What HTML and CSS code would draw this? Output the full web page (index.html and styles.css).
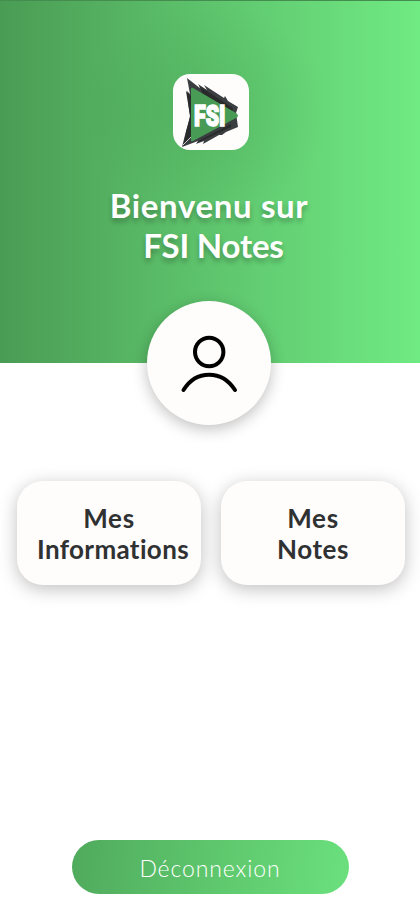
FILE: index.html
```html
<!DOCTYPE html>
<html lang="fr">
<head>
<meta charset="utf-8">
<meta name="viewport" content="width=device-width, initial-scale=1">
<title>FSI Notes</title>
<link rel="stylesheet" href="styles.css">
</head>
<body>
<div class="screen">
  <header class="hero">
    <svg class="logo" viewBox="0 0 76 76" role="img" aria-label="FSI">
      <path fill="#3b3e41" d="M14 4 28 15 25 10 34 16 31 11 51 24 52 22 55 27 65 33 63 39 65 53 53 58 49 61 46 61 30 70 31 67 23 70 25 67 9 73 13 57 17 44 14 17 17 20Z"/>
      <path fill="#fffcfc" d="M12 18 17 42 12 58 8 58V18Z"/>
      <path fill="#292b2b" d="M13 17 18 22V63L10 72 14 54 17 42ZM26 12 60 34 59 38 30 20ZM58 50 27 66 24 69 58 53Z"/>
      <path fill="none" stroke="#fffcfc" stroke-width=".8" d="M18 63 10 71"/>
      <path fill="#489b54" d="M18 15Q18 13 20 14L63 39Q67 42 63 44L20 67Q18 68 18 66Z"/>
      <text class="logo-text" x="21" y="52" textLength="31.500" lengthAdjust="spacingAndGlyphs">FSI</text>
    </svg>
    <h1 class="title"><span class="line-one">Bienvenu sur</span><span class="line-two">FSI Notes</span></h1>
  </header>
  <div class="avatar">
    <svg class="person" viewBox="0 0 60 60" aria-hidden="true">
      <circle cx="30.200" cy="18" r="14.200"/>
      <path d="M4.500 56C17 35.500 43 35.500 56 56"/>
    </svg>
  </div>
  <nav class="cards">
    <a class="card"><span class="mes">Mes</span><span class="informations">Informations</span></a>
    <a class="card"><span class="mes">Mes</span><span class="notes">Notes</span></a>
  </nav>
  <button class="logout" type="button">Déconnexion</button>
</div>
</body>
</html>
```
FILE: styles.css
```css
* { box-sizing: border-box; }
body { margin: 0; background: #fff; font-family: "Century Gothic", Lato, sans-serif; }
.screen { height: 914px; display: flex; flex-direction: column; align-items: center; overflow: hidden; }
.hero {
  width: 100%; height: 363px; flex: none; padding-top: 73px;
  display: flex; flex-direction: column; align-items: center;
  border-top: 1px solid #448d4e;
  background:
    radial-gradient(ellipse 125px 110px at 205px 110px, rgba(50, 130, 60, .2), rgba(50, 130, 60, 0)),
    linear-gradient(90deg, #4a9c54 0%, #5fc66e 52%, #70ea83 100%);
}
.logo { width: 76px; height: 76px; background: #fffcfc; border-radius: 17px; margin-left: 2px; flex: none; }
.logo-text { font-family: Roboto, sans-serif; font-weight: 900; font-size: 30px; fill: #fff; stroke: #fff; stroke-width: 1.6px; }
.title {
  margin: 35px 0 0; display: flex; flex-direction: column; align-items: center;
  color: #fff; font-size: 33px; line-height: 40px; font-weight: 700;
  text-shadow: 0 4px 5px rgba(0, 0, 0, .25);
}
.title span { white-space: nowrap; }
.line-one { letter-spacing: .65px; margin-right: 2px; }
.line-two { letter-spacing: -.2px; margin-left: 7px; }
.avatar {
  width: 124px; height: 124px; margin: -62px 2px 0 0; flex: none; position: relative;
  display: flex; justify-content: center; border-radius: 50%;
  background: #fffcfc; box-shadow: 0 4px 15px rgba(0, 0, 0, .25); padding-top: 33px;
}
.person { width: 60px; height: 60px; fill: none; stroke: #000; stroke-width: 4; stroke-linecap: round; }
.cards { display: flex; gap: 20px; margin: 56px 0 0 2px; }
.card {
  width: 184px; height: 104px; border-radius: 26px; padding-top: 22px;
  display: flex; flex-direction: column; align-items: center;
  background: #fffcfc; box-shadow: 0 4px 18px rgba(0, 0, 0, .25);
  color: #303132; font-size: 26px; line-height: 31px; font-weight: 700;
}
.mes { letter-spacing: .7px; }
.informations { letter-spacing: .35px; margin-left: 8px; }
.notes { letter-spacing: .6px; }
.logout {
  width: 277px; height: 54px; margin-top: 255px; padding: 1px 0 0; border: 0; border-radius: 27px;
  background: linear-gradient(97deg, #50aa5d, #5fc96e 55%, #6be07d);
  color: #fff; font-family: inherit; font-size: 23px; font-weight: 300; letter-spacing: .9px;
}
```
